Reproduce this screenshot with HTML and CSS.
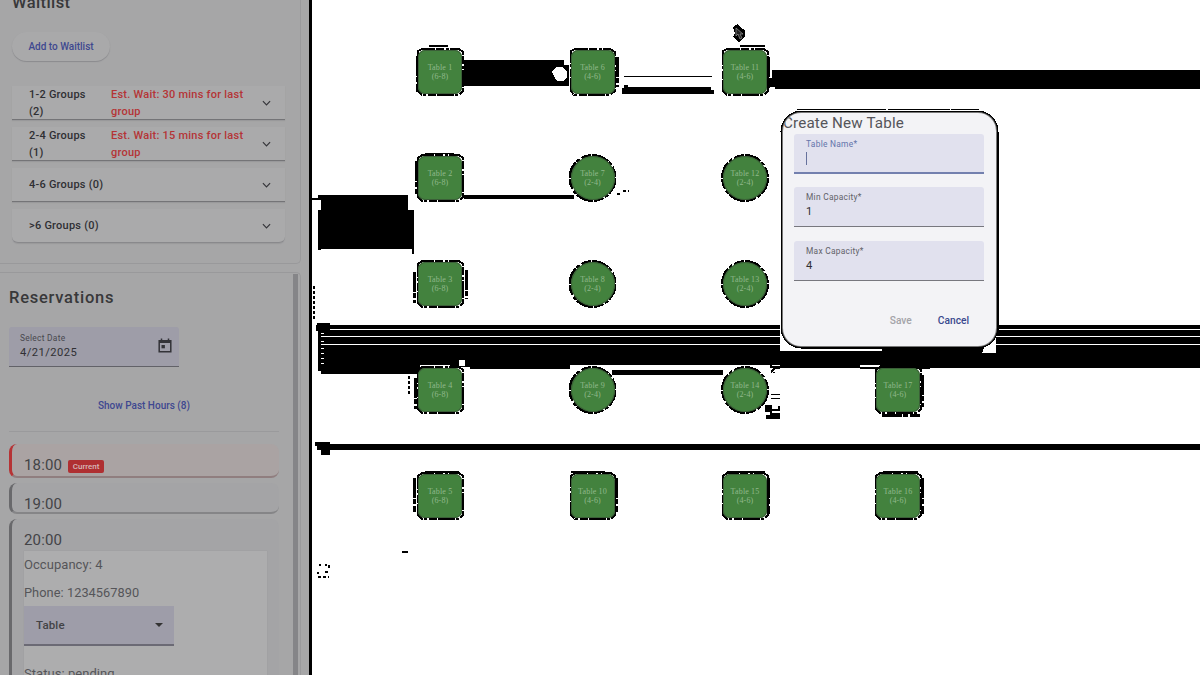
FILE: index.html
```html
<!DOCTYPE html>
<html lang="en">
<head>
<meta charset="utf-8">
<title>Floor plan</title>
<link rel="stylesheet" href="styles.css">
</head>
<body>
<div class="app">
  <aside class="sidebar">
    <section class="waitlist">
      <h2 class="heading">Waitlist</h2>
      <button class="add">Add to Waitlist</button>
      <div class="groups">
        <div class="group"><span class="group-name">1-2 Groups (2)</span><span class="wait">Est. Wait: 30 mins for last group</span><svg class="chevron" viewBox="0 0 10 6"><path d="M1 1l4 4 4-4"/></svg></div>
        <div class="group"><span class="group-name">2-4 Groups (1)</span><span class="wait">Est. Wait: 15 mins for last group</span><svg class="chevron" viewBox="0 0 10 6"><path d="M1 1l4 4 4-4"/></svg></div>
        <div class="group"><span class="group-name wide">4-6 Groups (0)</span><svg class="chevron" viewBox="0 0 10 6"><path d="M1 1l4 4 4-4"/></svg></div>
        <div class="group"><span class="group-name wide">&gt;6 Groups (0)</span><svg class="chevron" viewBox="0 0 10 6"><path d="M1 1l4 4 4-4"/></svg></div>
      </div>
    </section>
    <section class="reservations">
      <div class="res-body">
        <h2 class="heading res-title">Reservations</h2>
        <div class="date">
          <div><div class="label">Select Date</div><div class="value">4/21/2025</div></div>
          <svg class="calendar" viewBox="0 0 14 15"><path d="M1.2 2.7h11.6v11H1.2zM1.2 4.2h11.6M3.5 0.5v2M10.5 0.5v2" fill="none" stroke="#333338" stroke-width="1.5"/><path d="M3.5 7h3.4v3.3H3.5z" fill="#333338"/></svg>
        </div>
        <div class="past">Show Past Hours (8)</div>
        <div class="hour current"><span>18:00</span><span class="badge">Current</span></div>
        <div class="hour nineteen"><span>19:00</span></div>
        <div class="hour twenty"><span>20:00</span>
          <div class="booking">
            <div class="line">Occupancy: 4</div>
            <div class="line phone">Phone: 1234567890</div>
            <div class="select"><span>Table</span><i class="caret"></i></div>
            <div class="line status">Status: pending</div>
          </div>
        </div>
      </div>
      <div class="scrollbar"></div>
    </section>
  </aside>
  <main class="floor">
    <svg class="marks" viewBox="312 0 888 675" shape-rendering="crispEdges">
      <path d="M464 60H564V65H569V86H464zM772 70H1200V89H775V87H768V78H772zM318 195H408V210H414V254H412V249H321V250H318V210H321V200H312V198H318zM464 195H574V199H464zM624 76H712V77H624zM622 88H624V85H628V87H711V90H714V94H622zM317 323H330V325H1200V368H930V369H860V368H780V365H570V369H470V367H430V374H321V371H318V331H316V325H317zM612 370H723V375H612zM315 442H330V444H1200V450H330V455H321V450H317V446H315zM402 551H408V553H402z"/>
      <path d="M318 577H329M319 565H321M325 565H327M329 565V568M318 572V574M325 572H330M314 286V320M409 376V395M774 367V373M623 191H629M617 194H622M788 81V83" stroke="#000" stroke-width="1.5" stroke-dasharray="3 2"/>
      <path d="M771 394h9v1h-9zM771 398h9v1h-9zM765 405h7v4h6v-3h2v5h-8v2h8v6h-14v-4h4v-3h-5zM770 364l3 2h7v3h-5l-4 5v-4l3-2h-4z"/>
      <path d="M330 329.5H1200M321 336.5H1200M321 344.5H1200M321 333.5H324M321 341.5H324M321 348.500H324M321 353.5H324M321 358.5H324M321 363.5H324" stroke="#fff"/>
      <path d="M552 72l4-5h6l5 4v7l-4 3h-6l-3-5zM459 360h6v6h-6zM780 325h4l6 20h92v6h-102zM984 348l8-9 4-1v15h-14zM420 365h30v2h-30zM860 365h20v2h-20z" fill="#fff"/>
      <g class="ragged">
        <path d="M418 51l4-2h37l4 3v39l-4 4h-37l-4-4zM571 51l4-2h35l5 3v39l-5 4h-36l-3-4zM723 51l4-2h37l4 3v39l-4 4h-37l-4-4z"/>
        <path d="M418 158l4-3h37l4 3v39l-4 4h-37l-4-4zM418 264l4-3h37l4 3v39l-4 4h-37l-4-4zM418 370l4-3h37l4 3v39l-4 4h-37l-4-4z"/>
        <path d="M876 370l4-3h37l4 3v39l-4 4h-37l-4-4zM418 476l4-3h37l4 3v39l-4 4h-37l-4-4zM571 476l4-3h36l4 3v39l-4 4h-36l-4-4zM723 476l4-3h37l4 3v39l-4 4h-37l-4-4zM876 476l4-3h37l4 3v39l-4 4h-37l-4-4z"/>
      </g>
      <path class="edge" d="M417 56V92M416 161V194M414 272V303M415 378V409M414 478V512M617 57V87M768 57V88M768 478V514M922 375V407M922 478V514M466 270V299M616 478V512M882 415H920"/>
      <path d="M429 45h19v2h-19zM740 45h25v2h-25zM425 153h29v1h-29zM425 471h34v2h-34zM571 471h34v2h-34zM727 471h38v2h-38zM883 471h35v2h-35z"/>
      <g class="ragged round"><circle cx="592.5" cy="178" r="22.5"/><circle cx="745" cy="178" r="22.5"/><circle cx="592.5" cy="284" r="22.5"/><circle cx="745" cy="284" r="22.5"/><circle cx="592.5" cy="390" r="22.5"/><circle cx="745" cy="390" r="22.5"/></g>
      <path d="M733 27l5-3 2 3 5 3v7l-6 5-6-5 2-4z"/>
      <path d="M736 28v8l2-2 2 5 2-1-2-4h3z" fill="#222" stroke="#999" stroke-width=".7" shape-rendering="auto"/>
    </svg>
    <div class="tables">
      <div class="table c1 r1">Table 1<br>(6-8)</div><div class="table c2 r1">Table 6<br>(4-6)</div><div class="table c3 r1">Table 11<br>(4-6)</div>
      <div class="table c1 r2">Table 2<br>(6-8)</div><div class="table circle c2 r2">Table 7<br>(2-4)</div><div class="table circle c3 r2">Table 12<br>(2-4)</div>
      <div class="table c1 r3">Table 3<br>(6-8)</div><div class="table circle c2 r3">Table 8<br>(2-4)</div><div class="table circle c3 r3">Table 13<br>(2-4)</div>
      <div class="table c1 r4">Table 4<br>(6-8)</div><div class="table circle c2 r4">Table 9<br>(2-4)</div><div class="table circle c3 r4">Table 14<br>(2-4)</div><div class="table c4 r4">Table 17<br>(4-6)</div>
      <div class="table c1 r5">Table 5<br>(6-8)</div><div class="table c2 r5">Table 10<br>(4-6)</div><div class="table c3 r5">Table 15<br>(4-6)</div><div class="table c4 r5">Table 16<br>(4-6)</div>
    </div>
  </main>
  <svg class="dialog-edge" viewBox="0 0 222 242" shape-rendering="crispEdges"><rect x="2.5" y="2.500" width="216" height="236" rx="20" fill="#fff" stroke="#000" stroke-width="2"/><path d="M18 .5H200M2 30V221M219 30V221" stroke="#000" stroke-dasharray="89 2 62 1"/></svg>
  <div class="dialog">
    <h3 class="dialog-title">Create New Table</h3>
    <div class="field focus"><div class="label">Table Name*</div><div class="cursor"></div></div>
    <div class="field"><div class="label">Min Capacity*</div><div class="value">1</div></div>
    <div class="field"><div class="label">Max Capacity*</div><div class="value">4</div></div>
    <div class="actions"><span class="save">Save</span><span class="cancel">Cancel</span></div>
  </div>
</div>
</body>
</html>
```
FILE: styles.css
```css
* { box-sizing: border-box; }
body { margin: 0; background: #fff; font-family: Roboto, sans-serif; overflow: hidden; }
.app { position: relative; display: flex; width: 1200px; height: 675px; overflow: hidden; }
.sidebar { width: 312px; height: 675px; flex: none; background: #a6a6a7; border-right: 3px solid #000; display: flex; flex-direction: column; gap: 8px; overflow: hidden; }
.waitlist { width: 301px; height: 264px; flex: none; padding: 0 15px 0 12px; border: solid #99999b; border-width: 0 1px 1px 0; border-radius: 0 0 5px 0; }
.heading { margin: 0; font-size: 16.5px; font-weight: 500; line-height: 20px; color: #38383a; letter-spacing: .4px; }
.waitlist .heading { margin-top: -7px; }
.add { display: block; margin-top: 19px; width: 98px; height: 29px; padding: 0; border: 0; border-radius: 15px; background: #a9a9aa; box-shadow: 0 1px 1px #8b8b8e; color: #3e4890; font: 500 10px/29px Roboto, sans-serif; }
.groups { margin-top: 25px; display: flex; flex-direction: column; gap: 7px; }
.group { display: flex; align-items: center; height: 34px; padding: 0 14px 0 17px; background: #aaaaab; border-bottom: 1px solid #747477; box-shadow: 0 1px 1px #99999b; font-size: 11px; font-weight: 500; line-height: 17px; color: #2f2f33; }
.group:last-child { border-radius: 0 0 6px 6px; border-bottom-color: #89898c; }
.group-name { width: 64px; margin-right: 18px; letter-spacing: .23px; }
.group-name.wide { width: 120px; }
.wait { width: 138px; color: #b53436; letter-spacing: .24px; }
.chevron { width: 9px; height: 6px; margin-left: auto; fill: none; stroke: #35353a; stroke-width: 1.3; }
.reservations { width: 301px; height: 410px; padding-right: 2px; border: solid #99999b; border-width: 1px 1px 0 0; border-radius: 0 5px 0 0; display: flex; justify-content: space-between; }
.res-body { width: 279px; padding: 15px 0 0 9px; }
.scrollbar { width: 5px; margin-top: 1px; background: #858588; }
.res-title { height: 20px; letter-spacing: .75px; }
.date { width: 170px; height: 40px; margin-top: 19px; padding: 6px 7px 0 11px; display: flex; justify-content: space-between; background: #9e9da8; border-bottom: 1px solid #626268; border-radius: 3px 3px 0 0; }
.label { font-size: 8.4px; line-height: 11px; letter-spacing: .28px; color: #48484e; }
.value { font-size: 11.2px; line-height: 17px; color: #303034; letter-spacing: .45px; }
.calendar { width: 14px; height: 15px; margin-top: 5px; }
.past { margin: 31px 0 0 0; height: 34px; border-bottom: 1px solid #9a9a9c; text-align: center; color: #3e4890; font-size: 10px; line-height: 16px; font-weight: 500; }
.hour { width: 270px; border-left: 3px solid #69696c; border-bottom: 2px solid #858587; border-radius: 8px; background: #a4a4a6; padding-left: 12px; color: #434346; font-size: 15px; letter-spacing: .15px; }
.current { margin-top: 12px; height: 34px; line-height: 18px; padding-top: 12px; display: flex; gap: 6px; border-left-color: #b63335; border-bottom-color: #907e7f; background: #aaa3a3; }
.badge { width: 36px; height: 13px; margin-top: 4px; border-radius: 2px; background: #af2f32; color: #d6b8b9; font-size: 8px; font-weight: 500; line-height: 13px; text-align: center; letter-spacing: 0; }
.nineteen { margin-top: 5px; height: 31px; line-height: 18px; padding-top: 12px; }
.twenty { margin-top: 5px; height: 180px; line-height: 18px; padding-top: 12px; }
.booking { width: 243px; height: 150px; margin-top: 2px; background: #adadae; box-shadow: 0 0 1px #929294; }
.line { height: 28px; font-size: 13px; line-height: 27px; color: #555559; letter-spacing: .05px; }
.phone { height: 27px; font-size: 12.8px; }
.select { width: 150px; height: 40px; padding: 0 11px 0 12px; display: flex; align-items: center; justify-content: space-between; background: #9e9da9; border-bottom: 2px solid #6b6a75; font-size: 11.5px; font-weight: 500; }
.caret { border: solid transparent; border-width: 4px 4px 0; border-top-color: #333; }
.status { margin-top: 14px; }
.floor { position: relative; flex: 1; background: #fff; }
.marks { position: absolute; left: 0; top: 0; width: 888px; height: 675px; }
.ragged { fill: none; stroke: #000; stroke-width: 2; stroke-dasharray: 17 1 8 2 3 1; }
.round { stroke-width: 3; stroke-dasharray: 17 1 4 2 10 1; }
.edge { fill: none; stroke: #000; stroke-width: 3; stroke-dasharray: 20 1 5 2; }
.table { position: absolute; width: 44px; height: 44px; padding-top: 13px; border-radius: 7px; background: #43823e; box-shadow: inset 0 0 0 1px #3b5f38; color: #91b98c; font: 8px/9px "Liberation Serif", serif; letter-spacing: .15px; text-align: center; white-space: nowrap; }
.circle { border-radius: 50%; }
.c1 { left: 106px; } .c2 { left: 258.5px; } .c3 { left: 411px; } .c4 { left: 564px; }
.r1 { top: 50px; } .r2 { top: 156px; } .r3 { top: 262px; } .r4 { top: 368px; } .r5 { top: 474px; }
.dialog-edge { position: absolute; left: 779px; top: 109px; width: 222px; height: 242px; }
.dialog { position: absolute; left: 783px; top: 113px; width: 213px; height: 233px; padding: 1px 12px 0 11px; overflow: hidden; border-radius: 18px; background: #f3f3f6; box-shadow: 0 0 0 1px #777; }
.dialog-title { margin: 0 0 1px -11px; font-size: 15.2px; font-weight: 400; line-height: 19px; letter-spacing: .15px; color: #55555a; }
.field { height: 40px; margin-bottom: 14px; padding: 5px 12px 0; background: #e1e1ee; border-bottom: 1px solid #77777e; border-radius: 3px 3px 0 0; }
.field .label { color: #626269; }
.field.focus { margin-bottom: 13px; border-bottom: 2px solid #7380ae; }
.focus .label { color: #6374aa; }
.cursor { width: 1px; height: 13px; margin-top: 2px; background: #66719c; }
.actions { display: flex; justify-content: flex-end; gap: 26px; padding: 18px 15px 0 0; font-size: 10.2px; line-height: 16px; font-weight: 500; }
.save { color: #a3a3a8; }
.cancel { color: #39498e; }
```
